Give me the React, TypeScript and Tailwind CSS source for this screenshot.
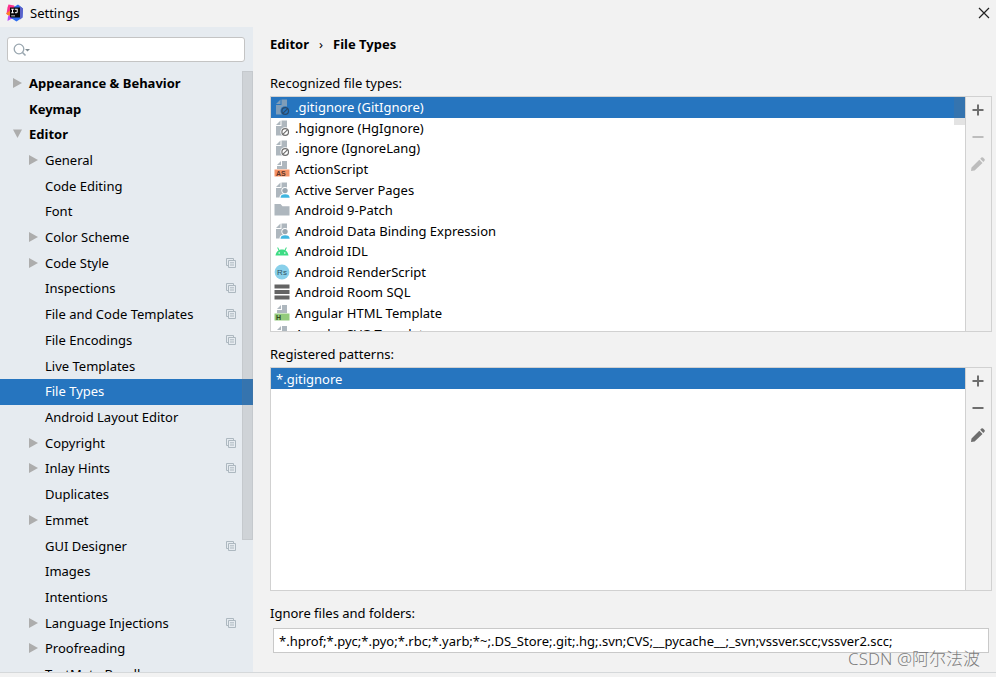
import { ReactNode, useState } from "react";
import clsx from "clsx";

type TreeItem = {
  label: string;
  top?: boolean;
  arrow?: "right" | "down";
  project?: boolean;
};

const tree: TreeItem[] = [
  { label: "Appearance & Behavior", top: true, arrow: "right" },
  { label: "Keymap", top: true },
  { label: "Editor", top: true, arrow: "down" },
  { label: "General", arrow: "right" },
  { label: "Code Editing" },
  { label: "Font" },
  { label: "Color Scheme", arrow: "right" },
  { label: "Code Style", arrow: "right", project: true },
  { label: "Inspections", project: true },
  { label: "File and Code Templates", project: true },
  { label: "File Encodings", project: true },
  { label: "Live Templates" },
  { label: "File Types" },
  { label: "Android Layout Editor" },
  { label: "Copyright", arrow: "right", project: true },
  { label: "Inlay Hints", arrow: "right", project: true },
  { label: "Duplicates" },
  { label: "Emmet", arrow: "right" },
  { label: "GUI Designer", project: true },
  { label: "Images" },
  { label: "Intentions" },
  { label: "Language Injections", arrow: "right", project: true },
  { label: "Proofreading", arrow: "right" },
  { label: "TextMate Bundles" },
];

const fileTypes = [
  { label: ".gitignore (GitIgnore)", icon: "ignore" },
  { label: ".hgignore (HgIgnore)", icon: "ignore" },
  { label: ".ignore (IgnoreLang)", icon: "ignore" },
  { label: "ActionScript", icon: "as" },
  { label: "Active Server Pages", icon: "user" },
  { label: "Android 9-Patch", icon: "folder" },
  { label: "Android Data Binding Expression", icon: "user" },
  { label: "Android IDL", icon: "android" },
  { label: "Android RenderScript", icon: "rs" },
  { label: "Android Room SQL", icon: "sql" },
  { label: "Angular HTML Template", icon: "html" },
  { label: "Angular SVG Template", icon: "html" },
];

const Svg = ({ children }: { children: ReactNode }) => (
  <svg viewBox="0 0 16 16" className="size-4 shrink-0" aria-hidden="true">
    {children}
  </svg>
);

const FileIcon = ({ name, selected }: { name: string; selected: boolean }) => {
  const gray = selected ? "#7f9db8" : "#aeb7be";
  const page = (
    <>
      <path d="M6.5 0.5 2 5h4.500z" fill={gray} />
      <path d="M7.500 0.5V6H2v9.5h11V0.5z" fill={gray} />
    </>
  );

  switch (name) {
    case "ignore":
      return (
        <Svg>
          {page}
          <circle cx="11.2" cy="12" r="4.8" fill={selected ? "#2675bf" : "#fff"} />
          <circle cx="11.2" cy="12" r="3.3" fill="none" stroke={selected ? "#2b4a68" : "#6e6e6e"} strokeWidth="1.2" />
          <path d="m9 14.2 4.4-4.4" stroke={selected ? "#2b4a68" : "#6e6e6e"} strokeWidth="1.2" />
        </Svg>
      );
    case "user":
      return (
        <Svg>
          {page}
          <circle cx="11" cy="8.6" r="3.6" fill="#fff" />
          <path d="M5.500 16c0-3.5 2-4.5 5.5-4.5s5 1 5 4.5z" fill="#fff" />
          <circle cx="11" cy="8.6" r="2.7" fill="#9aa7b0" />
          <path d="M6.500 15.8c.2-2.400 1.500-3.500 4.600-3.500s4.400 1.100 4.600 3.500z" fill="#40b6e0" />
        </Svg>
      );
    case "as":
    case "html": {
      const as = name === "as";
      return (
        <Svg>
          <path d="M7 0 3 4h4zM8 0v5H3v3h10V0z" fill={gray} />
          <path d="M0.500 8.500h15V15.500h-15z" fill={as ? "#f59468" : "#93cb7c"} />
          <text
            x={as ? 2 : 2}
            y="14.5"
            fontSize="7"
            fontWeight="700"
            fontFamily="Liberation Sans, sans-serif"
            fill={as ? "#5e3427" : "#31471f"}
          >
            {as ? "AS" : "H"}
          </text>
        </Svg>
      );
    }
    case "folder":
      return (
        <Svg>
          <path d="M0.500 2h6l2 2.200h7V13.500h-15z" fill="#aeb7be" />
        </Svg>
      );
    case "android":
      return (
        <Svg>
          <path d="M1.500 12.500c.2-2.500 1.500-4.200 3-5.100L3.200 4.800l.8-.5 1.500 2.600c1.600-.6 3.400-.6 5 0L12 4.300l.8.5-1.300 2.600c1.500.9 2.800 2.600 3 5.100z" fill="#3ddc84" />
          <circle cx="5.200" cy="10" r=".8" fill="#fff" />
          <circle cx="10.800" cy="10" r=".8" fill="#fff" />
        </Svg>
      );
    case "rs":
      return (
        <Svg>
          <circle cx="8" cy="8" r="7.400" fill="#89d0ea" />
          <text x="8" y="10.800" textAnchor="middle" fontSize="8" fontFamily="Liberation Sans, sans-serif" fill="#2f5061">
            Rs
          </text>
        </Svg>
      );
    default:
      return (
        <Svg>
          <path d="M0.500 0.500h15v4h-15zM0.500 6h15v4h-15zM0.500 11.500h15v4h-15z" fill="#646464" />
        </Svg>
      );
  }
};

const Arrow = ({ dir }: { dir: "right" | "down" }) => (
  <svg viewBox="0 0 10 10" className="size-2.5" aria-hidden="true">
    <path d={dir === "right" ? "M1 0 10 5 1 10z" : "M1 0.500h9L5.500 9z"} fill="#adadad" />
  </svg>
);

const ProjectIcon = () => (
  <svg viewBox="0 0 10 10" className="size-2.5" fill="none" stroke="#adb8c0" aria-hidden="true">
    <path d="M2.500 7.500h-2v-7h7v2" />
    <path d="M2.500 2.500h7v7h-7zM4 4.800h4M4 7h4" />
  </svg>
);

const tools = [
  { label: "Add", d: "M7 2.500h2V7h4.500v2H9v4.500H7V9H2.500V7H7z" },
  { label: "Remove", d: "M2.500 7h11v2h-11z" },
  { label: "Edit", d: "M1 15 1.500 11.500l7.800-7.800 3.200 3.200L4.600 14.600zM10.200 2.800l1.200-1.200q.8-.7 1.600 0l1.500 1.500q.7.800 0 1.600l-1.200 1.200z" },
];

const Toolbar = ({ name, locked }: { name: string; locked?: boolean }) => (
  <div role="toolbar" aria-label={name} className="flex w-[26px] shrink-0 flex-col items-center gap-[11px] border-l border-[#d1d1d1] bg-[#f2f2f2] pt-[5px] pr-px">
    {tools.map((tool, index) => (
      <button
        key={tool.label}
        type="button"
        aria-label={tool.label}
        disabled={locked && index > 0}
        className="text-[#6e6e6e] disabled:text-[#bdbdbd]"
      >
        <svg viewBox="0 0 16 16" className="size-4" fill="currentColor">
          <path d={tool.d} />
        </svg>
      </button>
    ))}
  </div>
);

const Logo = () => (
  <svg viewBox="0 0 18 18" className="size-[18px]" aria-hidden="true">
    <path d="M1.500 3.500 2.500 0.500 8 1.500l2 3.500-6 7-3.500-2z" fill="#fc318c" />
    <path d="m0 9.500 4-3 1.500 7.500z" fill="#fd8224" />
    <path d="m2 12.500 4-3 4 5-5 .5-3.500 2z" fill="#b74af7" />
    <path d="M8 3 12 0.500 17 4.500l-.5 9-6 4L5 14z" fill="#2b6cf0" />
    <path d="M13 1.500 17 4.500l-.5 9-2.500 2z" fill="#5b62c9" />
    <path d="M4 3.500h10v10H4z" fill="#080808" />
    <path d="M5.200 4.800h2.600v.9h-.8v2.600h.8v.9H5.200v-.9H6V5.700h-.8zM8.800 4.800h2.900v3q0 1.500-1.500 1.500-.9 0-1.500-.6l.6-.7q.4.300.8.300.6 0 .6-.6V5.700H8.800zM5.200 11.500h3.800v.8H5.200z" fill="#fff" />
  </svg>
);

const App = () => {
  const [page, setPage] = useState("File Types");
  const [fileType, setFileType] = useState(0);

  return (
    <div className="relative flex h-screen flex-col overflow-hidden bg-[#f2f2f2] font-['Noto_Sans','Noto_Sans_CJK_SC',sans-serif] text-[13px] leading-5 text-black">
      <header className="flex h-[27px] shrink-0 items-center gap-1.5 pr-1.5 pb-0.5 pl-1.5">
        <Logo />
        <h1>Settings</h1>
        <button type="button" aria-label="Close" className="ml-auto">
          <svg viewBox="0 0 12 12" className="size-3" stroke="#222" strokeWidth="1.200">
            <path d="m1 1 10 10M11 1 1 11" />
          </svg>
        </button>
      </header>

      <div className="flex min-h-0 flex-1">
        <aside className="flex w-[253px] shrink-0 flex-col bg-[#e6ebf0]">
          <label className="mt-2.5 mr-2 ml-[7px] flex h-[25px] shrink-0 items-center rounded-[3px] border border-[#c4c4c4] bg-white pl-[5px]">
            <svg viewBox="0 0 18 14" className="h-3.5 w-[18px] shrink-0" fill="none" stroke="#9aa7b0" aria-hidden="true">
              <circle cx="6" cy="6" r="4.800" strokeWidth="1.300" />
              <path d="m9.500 9.500 3 3" strokeWidth="1.600" />
              <path d="M12 6h5l-2.500 2.500z" fill="#7f8b91" stroke="none" />
            </svg>
            <input type="text" aria-label="Search settings" className="min-w-0 flex-1 outline-none" />
          </label>

          <nav aria-label="Settings pages" className="relative mt-[9px] min-h-0 flex-1 overflow-hidden">
            <ul className="flex h-[617px] flex-col">
              {tree.map((item) => (
                <li key={item.label} className="min-h-0 flex-1">
                  <button
                    type="button"
                    onClick={() => setPage(item.label)}
                    className={clsx(
                      "flex size-full items-center pr-[17px] pb-0.5 text-left whitespace-nowrap",
                      item.top ? "pl-3 font-bold" : "pl-7",
                      page === item.label && "bg-[#2675bf] text-white"
                    )}
                  >
                    <span className="flex w-[17px] shrink-0">{item.arrow && <Arrow dir={item.arrow} />}</span>
                    <span className="flex-1">{item.label}</span>
                    {item.project && <ProjectIcon />}
                  </button>
                </li>
              ))}
            </ul>
            {/* scroll thumb floats over the rows */}
            <div className="absolute top-0 right-0 h-[469px] w-[11px] border border-[#737373]/10 bg-[#737373]/20" />
          </nav>
        </aside>

        <main className="flex min-w-0 flex-1 flex-col pr-1 pb-[19px] pl-[17px]">
          <h2 className="mt-[7px] flex gap-2.5 font-bold">
            <span>Editor</span>
            <span className="font-normal">›</span>
            <span>File Types</span>
          </h2>

          <h3 className="mt-[19px]">Recognized file types:</h3>
          <div className="mt-[3px] flex h-[236px] shrink-0 border border-[#d1d1d1] bg-white">
            <div className="relative min-w-0 flex-1 overflow-hidden">
              <ul className="flex h-[247px] flex-col">
                {fileTypes.map((type, index) => (
                  <li key={type.label} className="min-h-0 flex-1">
                    <button
                      type="button"
                      onClick={() => setFileType(index)}
                      className={clsx(
                        "flex size-full items-center gap-[5px] pl-[3px] text-left whitespace-nowrap",
                        fileType === index && "bg-[#2675bf] text-white"
                      )}
                    >
                      <FileIcon name={type.icon} selected={fileType === index} />
                      <span>{type.label}</span>
                    </button>
                  </li>
                ))}
              </ul>
              <div className="absolute top-0 right-0 h-7 w-[11px] bg-[#737373]/20" />
            </div>
            <Toolbar name="File type actions" locked />
          </div>

          <h3 className="mt-3">Registered patterns:</h3>
          <div className="mt-[3px] flex min-h-0 flex-1 border border-[#d1d1d1] bg-white">
            <ul className="min-w-0 flex-1">
              <li>
                <button type="button" className="flex h-[21px] w-full items-center bg-[#2675bf] pl-[5px] text-white">
                  *.gitignore
                </button>
              </li>
            </ul>
            <Toolbar name="Pattern actions" />
          </div>

          <label htmlFor="ignored" className="mt-3">
            Ignore files and folders:
          </label>
          <input
            id="ignored"
            type="text"
            defaultValue="*.hprof;*.pyc;*.pyo;*.rbc;*.yarb;*~;.DS_Store;.git;.hg;.svn;CVS;__pycache__;_svn;vssver.scc;vssver2.scc;"
            className="mx-[3px] mt-[5px] h-[25px] shrink-0 border border-[#c9c9c9] bg-white px-[5px] outline-none"
          />
        </main>
      </div>

      <footer className="h-[5px] shrink-0 border-t border-[#d5d8da]" />

      <p className="absolute right-4 bottom-1.5 text-[17px] leading-6 font-light text-[#666]/85">CSDN @阿尔法波</p>
    </div>
  );
};

export default App;
